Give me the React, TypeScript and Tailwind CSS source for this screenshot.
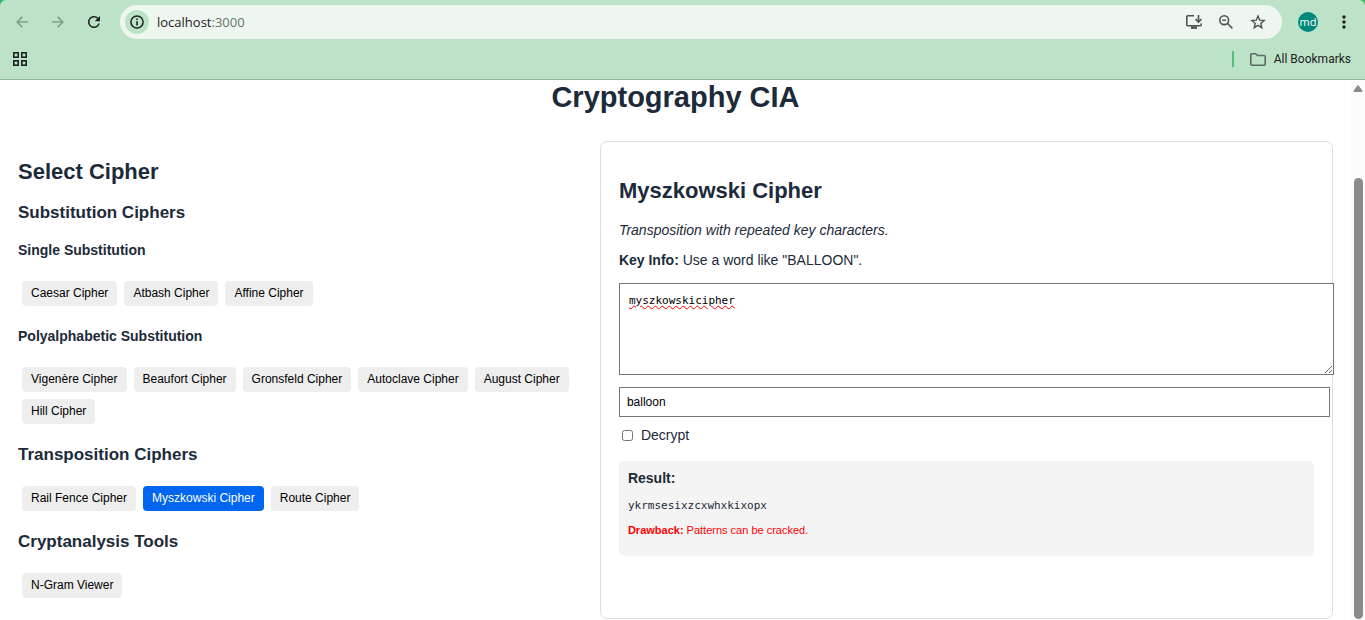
import { useState } from "react";
import type { ReactNode } from "react";
import { MdMoreVert, MdRefresh } from "react-icons/md";

function BackIcon() {
  return (
    <svg width="12" height="12" viewBox="0 0 12 12" fill="none" stroke="currentColor" strokeWidth="1.7">
      <path d="M12 6H1.2M6.3 0.8L1.1 6l5.2 5.2" />
    </svg>
  );
}

function ForwardIcon() {
  return (
    <svg width="12" height="12" viewBox="0 0 12 12" fill="none" stroke="currentColor" strokeWidth="1.7">
      <path d="M0 6h10.8M5.7 0.8L10.9 6l-5.2 5.2" />
    </svg>
  );
}

function AppsIcon() {
  return (
    <svg width="14" height="14" viewBox="0 0 14 14" fill="none" stroke="currentColor" strokeWidth="1.6">
      <rect x="0.8" y="0.8" width="4.4" height="4.4" />
      <rect x="8.8" y="0.8" width="4.4" height="4.4" />
      <rect x="0.8" y="8.8" width="4.4" height="4.4" />
      <rect x="8.8" y="8.8" width="4.4" height="4.4" />
    </svg>
  );
}

function InfoIcon() {
  return (
    <svg width="14" height="14" viewBox="0 0 14 14" fill="none" stroke="currentColor" strokeWidth="1.5">
      <circle cx="7" cy="7" r="6.1" />
      <path d="M7 6.2v4.2M7 3.6v1.5" strokeWidth="1.6" />
    </svg>
  );
}

function InstallIcon() {
  return (
    <svg width="16" height="14" viewBox="0 0 16 14" fill="none" stroke="currentColor" strokeWidth="1.6">
      <path d="M8 0.8H1.8a1 1 0 0 0-1 1v8a1 1 0 0 0 1 1h12.4a1 1 0 0 0 1-1V8.4" />
      <path d="M5 12.6h6" strokeWidth="2.6" />
      <path d="M12.5 0v6.4M9.6 4.1l2.9 2.9 2.9-2.9" />
    </svg>
  );
}

function ZoomOutIcon() {
  return (
    <svg width="14" height="14" viewBox="0 0 14 14" fill="none" stroke="currentColor" strokeWidth="1.6">
      <circle cx="5.2" cy="5.2" r="4.4" />
      <path d="M8.3 8.3l5.1 5.1" />
      <path d="M3.2 5.2h4" strokeWidth="1.4" />
    </svg>
  );
}

function StarIcon() {
  return (
    <svg width="16" height="16" viewBox="0 0 16 16" fill="none" stroke="currentColor" strokeWidth="1.4">
      <path d="M8 2.1l1.7 4 4.4 0.4-3.3 2.9 1 4.3L8 11.4l-3.8 2.3 1-4.3-3.3-2.9 4.4-0.4z" />
    </svg>
  );
}

function FolderIcon() {
  return (
    <svg width="16" height="13" viewBox="0 0 16 13" fill="none" stroke="currentColor" strokeWidth="1.6" strokeLinejoin="round">
      <path d="M0.8 1.8a1 1 0 0 1 1-1h3.9l1.7 1.7h6.8a1 1 0 0 1 1 1v7.7a1 1 0 0 1-1 1H1.8a1 1 0 0 1-1-1z" />
    </svg>
  );
}

function IconButton({ label, children, className = "" }: { label: string; children: ReactNode; className?: string }) {
  return (
    <button type="button" aria-label={label} className={`flex size-5 items-center justify-center ${className}`}>
      {children}
    </button>
  );
}

function BrowserBar() {
  return (
    <header className="border-b border-[#93b8a0] bg-[#38b768] font-['Open_Sans',sans-serif] text-[#1f2023]">
      <div className="rounded-t-md bg-[#bce3c8]">
        <div className="flex h-11 items-center pr-[11px] pl-3">
          <nav className="flex items-center gap-4">
            <IconButton label="Back" className="text-[#839e8c]"><BackIcon /></IconButton>
            <IconButton label="Forward" className="text-[#839e8c]"><ForwardIcon /></IconButton>
            <IconButton label="Reload"><MdRefresh size={18} /></IconButton>
          </nav>
          <div className="ml-4 flex h-[34px] flex-1 items-center rounded-full bg-[#edf7f0] pr-[14px] pl-[5px]">
            <button type="button" aria-label="Site information" className="flex size-6 items-center justify-center rounded-full bg-[#bce3c8]">
              <InfoIcon />
            </button>
            <div className="ml-2 flex-1 text-[13px] leading-5">
              localhost<span className="text-[#66736b]">:3000</span>
            </div>
            <div className="flex items-center gap-3 text-[#4c5650]">
              <IconButton label="Install app"><InstallIcon /></IconButton>
              <IconButton label="Zoom"><ZoomOutIcon /></IconButton>
              <IconButton label="Bookmark this page"><StarIcon /></IconButton>
            </div>
          </div>
          <button type="button" aria-label="Profile" className="ml-4 flex size-5 items-center justify-center rounded-full bg-[#00897b] pb-0.5 text-[11px] leading-none text-white">
            md
          </button>
          <IconButton label="Menu" className="ml-4"><MdMoreVert size={20} /></IconButton>
        </div>
        <div className="flex h-[35px] items-center justify-between pr-[14px] pb-[5px] pl-[13px]">
          <button type="button" aria-label="Apps"><AppsIcon /></button>
          <div className="flex items-center">
            <span className="h-4 w-0.5 bg-[#55bd7a]" />
            <button type="button" className="ml-4 flex items-center gap-2 font-[Roboto,sans-serif] text-[12px] leading-4">
              <span className="text-[#5c6b62]"><FolderIcon /></span>
              All Bookmarks
            </button>
          </div>
        </div>
      </div>
    </header>
  );
}

function CipherButtons({ names, selected, onSelect }: { names: string[]; selected: string; onSelect: (name: string) => void }) {
  return (
    <div className="flex flex-wrap gap-[7px] pl-1">
      {names.map((name) => (
        <button
          key={name}
          type="button"
          aria-pressed={name === selected}
          onClick={() => onSelect(name)}
          className={`h-[25px] rounded-[4px] px-[9px] pb-0.5 text-[12px] leading-4 ${
            name === selected ? "bg-[#0066f0] text-white" : "bg-[#eeeeee] text-black"
          }`}
        >
          {name}
        </button>
      ))}
    </div>
  );
}

const singleCiphers = ["Caesar Cipher", "Atbash Cipher", "Affine Cipher"];
const polyCiphers = ["Vigenère Cipher", "Beaufort Cipher", "Gronsfeld Cipher", "Autoclave Cipher", "August Cipher", "Hill Cipher"];
const transpositionCiphers = ["Rail Fence Cipher", "Myszkowski Cipher", "Route Cipher"];
const tools = ["N-Gram Viewer"];

export default function App() {
  const [selected, setSelected] = useState("Myszkowski Cipher");
  const [text, setText] = useState("myszkowskicipher");
  const [key, setKey] = useState("balloon");
  const [decrypt, setDecrypt] = useState(false);

  return (
    <div className="flex min-h-screen flex-col bg-white font-['Liberation_Sans',Arial,sans-serif] text-[14px] leading-5 text-[#1c2a3a]">
      <BrowserBar />
      <div className="flex flex-1">
        <main className="min-w-0 flex-1 px-[18px] pb-px">
          <h1 className="text-center text-[29px] leading-[34px] font-bold">Cryptography CIA</h1>
          <div className="mt-[27px] grid grid-cols-[10fr_13fr] gap-[18px]">
            <section className="min-w-0 pt-[18px]">
              <h2 className="mb-[18px] text-[22px] leading-[26px] font-bold">Select Cipher</h2>
              <h3 className="mb-[19px] text-[17px] leading-5 font-bold">Substitution Ciphers</h3>
              <h4 className="mb-[23px] text-[14px] leading-4 font-bold">Single Substitution</h4>
              <CipherButtons names={singleCiphers} selected={selected} onSelect={setSelected} />
              <h4 className="mt-[22px] mb-[23px] text-[14px] leading-4 font-bold">Polyalphabetic Substitution</h4>
              <CipherButtons names={polyCiphers} selected={selected} onSelect={setSelected} />
              <h3 className="mt-[21px] mb-[21px] text-[17px] leading-5 font-bold">Transposition Ciphers</h3>
              <CipherButtons names={transpositionCiphers} selected={selected} onSelect={setSelected} />
              <h3 className="mt-[21px] mb-[21px] text-[17px] leading-5 font-bold">Cryptanalysis Tools</h3>
              <CipherButtons names={tools} selected={selected} onSelect={setSelected} />
            </section>

            <section className="min-w-0 rounded-[7px] border border-[#dddddd] px-[18px] pt-9 pb-[62px]">
              <h2 className="text-[22px] leading-[26px] font-bold">{selected}</h2>
              <p className="mt-4 italic">Transposition with repeated key characters.</p>
              <p className="mt-[10px]"><strong>Key Info:</strong> Use a word like "BALLOON".</p>
              <textarea
                aria-label="Text"
                value={text}
                onChange={(e) => setText(e.target.value)}
                spellCheck={false}
                className="mt-[13px] box-content block h-[72px] w-full resize border border-[#767676] bg-white p-[9px] font-['DejaVu_Sans_Mono',monospace] text-[11px] leading-4 text-black underline decoration-[#ff0000] decoration-wavy decoration-1 outline-none"
              />
              <input
                type="text"
                aria-label="Key"
                value={key}
                onChange={(e) => setKey(e.target.value)}
                className="mt-3 box-content block h-[14px] w-full border border-[#767676] bg-white p-[7px] text-[12px] leading-[14px] text-black outline-none"
              />
              <label className="mt-2 flex w-fit items-center gap-2 pl-[3px]">
                <input type="checkbox" checked={decrypt} onChange={(e) => setDecrypt(e.target.checked)} className="size-[11px]" />
                Decrypt
              </label>
              <div className="mt-4 rounded-[5px] bg-[#f4f4f4] p-[9px] pb-[19px]">
                <h4 className="text-[14px] leading-4 font-bold">Result:</h4>
                <pre className="mt-3 font-['DejaVu_Sans_Mono',monospace] text-[11px] leading-4">ykrmsesixzcxwhxkixopx</pre>
                <p className="mt-[9px] text-[11px] leading-[14px] text-[#ff0000]">
                  <strong>Drawback:</strong> Patterns can be cracked.
                </p>
              </div>
            </section>
          </div>
        </main>
        <div aria-hidden="true" className="flex w-[14px] flex-col items-center bg-[#fcfcfc] pt-[5px] pb-px">
          <svg width="10" height="8" viewBox="0 0 10 8" fill="#8b8b8b">
            <path d="M4.1 0.8a1.1 1.1 0 0 1 1.8 0l3.3 4.6a0.9 0.9 0 0 1-0.7 1.5h-7a0.9 0.9 0 0 1-0.7-1.5z" />
          </svg>
          <div className="mt-[85px] w-[9px] flex-1 rounded-full bg-[#8b8b8b]" />
        </div>
      </div>
    </div>
  );
}
